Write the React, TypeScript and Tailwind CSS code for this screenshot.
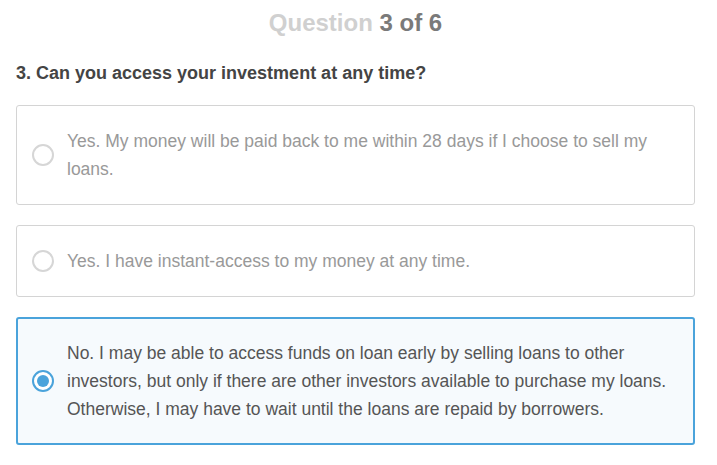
import React from "react";

const options = [
  "Yes. My money will be paid back to me within 28 days if I choose to sell my loans.",
  "Yes. I have instant-access to my money at any time.",
  "No. I may be able to access funds on loan early by selling loans to other investors, but only if there are other investors available to purchase my loans. Otherwise, I may have to wait until the loans are repaid by borrowers.",
];

function Radio({ checked }: { checked: boolean }) {
  return checked ? (
    <span className="flex h-[22px] w-[22px] shrink-0 items-center justify-center rounded-full border-2 border-[#4aa3db] bg-white">
      <span className="h-[12px] w-[12px] rounded-full bg-[#4aa3db]" />
    </span>
  ) : (
    <span className="h-[22px] w-[22px] shrink-0 rounded-full border-2 border-[#d6d6d6] bg-white" />
  );
}

export default function App() {
  const selected = 2;
  return (
    <div className="w-[717px] h-[465px] bg-white pl-[16px] pr-[22px] pt-[8px] font-['Liberation_Sans',Arial,sans-serif]">
      <h1 className="text-center text-[24px] font-bold leading-[30px] text-[#d0d0d0]">
        Question <span className="text-[#7a7a7a]">3 of 6</span>
      </h1>
      <h2 className="mt-[24px] text-[18px] font-bold leading-[22px] text-[#444444]">
        3. Can you access your investment at any time?
      </h2>
      <div className="mt-[21px] flex flex-col gap-[20px]">
        {options.map((text, i) => {
          const isSel = i === selected;
          return (
            <div
              key={i}
              className={
                isSel
                  ? "flex items-center gap-[13px] rounded-[3px] border-2 border-[#4aa3db] bg-[#f6fafd] py-[20px] pl-[14px]"
                  : "flex items-center gap-[13px] rounded-[3px] border border-[#d4d4d4] bg-white py-[21px] pl-[15px]"
              }
            >
              <Radio checked={isSel} />
              <p
                className={
                  isSel
                    ? "max-w-[612px] text-[17.5px] leading-[28px] text-[#555555]"
                    : "max-w-[612px] text-[17.5px] leading-[28px] text-[#999999]"
                }
              >
                {text}
              </p>
            </div>
          );
        })}
      </div>
    </div>
  );
}
